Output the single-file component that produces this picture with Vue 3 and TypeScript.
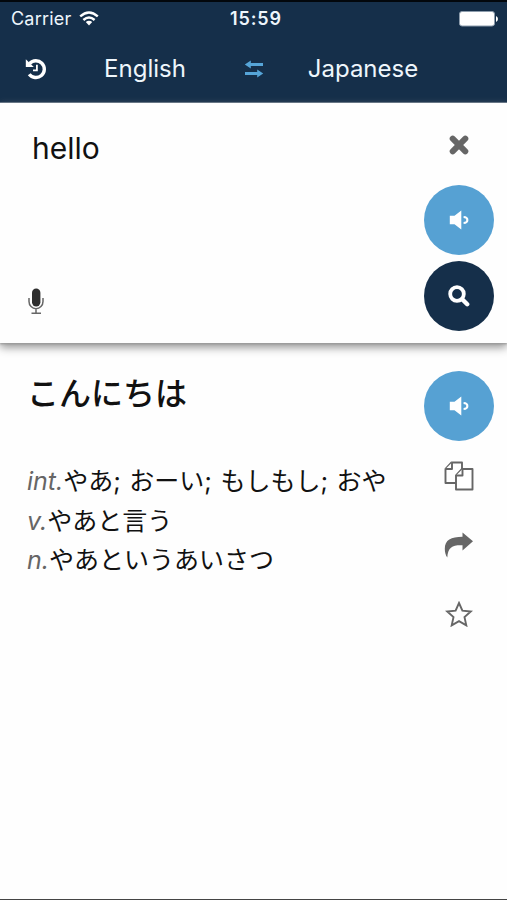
<script setup lang="ts">
interface Definition {
  pos: string
  text: string
}

const source = 'hello'
const translation = 'こんにちは'
const definitions: Definition[] = [
  { pos: 'int.', text: 'やあ; おーい; もしもし; おや' },
  { pos: 'v.', text: 'やあと言う' },
  { pos: 'n.', text: 'やあというあいさつ' },
]
</script>

<template>
  <div class="screen">
    <header class="top">
      <div class="status">
        <div class="carrier">
          <span>Carrier</span>
          <svg class="wifi" viewBox="0 0 20 16" width="20" height="16">
            <g fill="none" stroke="#fff" stroke-width="2.4">
              <path d="M1.2 5.4Q10 -2.5 18.8 5.4" />
              <path d="M4.4 9Q10 3.9 15.6 9" />
            </g>
            <path d="M6.8 11.1Q10 8.5 13.2 11.1L10 14.5Z" fill="#fff" />
          </svg>
        </div>
        <div class="clock">15:59</div>
        <svg class="battery" viewBox="0 0 40 16" width="40" height="16">
          <rect x=".5" y=".5" width="35" height="14.5" rx="2.5" fill="#fff" stroke="#8c9cac" />
          <path d="M37 5q2 .8 2 3t-2 3z" fill="#fff" />
        </svg>
      </div>
      <nav class="languages">
        <button class="history" aria-label="History">
          <svg viewBox="0 0 22 22" width="22" height="22">
            <path d="M4.6 5.6A8.4 8.4 0 1 1 4.2 16.2" fill="none" stroke="#fff" stroke-width="3.4" />
            <path d="M.8 1.2V9h8z" fill="#fff" />
            <path d="M11.9 6.8v5.6H8" fill="none" stroke="#fff" stroke-width="1.8" />
          </svg>
        </button>
        <button class="lang">English</button>
        <button class="swap" aria-label="Swap languages">
          <svg viewBox="0 0 20 18" width="20" height="18">
            <path d="M5 4.5H19M1 13.5H15" stroke="#56a5d8" stroke-width="3" fill="none" />
            <path d="M.8 4.5 6.8.4v8.2zM19.2 13.5l-6-4.1v8.2z" fill="#56a5d8" />
          </svg>
        </button>
        <button class="lang">Japanese</button>
      </nav>
    </header>

    <section class="source">
      <div class="entry">
        <div class="query">{{ source }}</div>
        <svg class="mic" viewBox="0 0 16 27" width="16" height="27">
          <rect x="4" y=".5" width="8.4" height="18" rx="4.2" fill="#2e2e2e" />
          <path d="M1 10v3.5a7 7.2 0 0 0 14 0V10M8 21v4M3.5 25.2h9.5" fill="none" stroke="#666" stroke-width="1.5" />
        </svg>
      </div>
      <div class="rail">
        <button class="clear" aria-label="Clear">
          <svg viewBox="0 0 20 20" width="20" height="20">
            <path d="M3.7 3.7l12.6 12.6M16.3 3.7L3.7 16.3" stroke="#666" stroke-width="6" stroke-linecap="round" />
          </svg>
        </button>
        <button class="round" aria-label="Listen">
          <svg viewBox="0 0 20 20" width="20" height="20">
            <path d="M.8 5.8H5.5L12.3.5v19L5.5 14.2H.8z" fill="#fff" />
            <path d="M14.6 7q3.8.2 3.8 3t-3.8 3" fill="none" stroke="#fff" stroke-width="2" />
          </svg>
        </button>
        <button class="round dark" aria-label="Search">
          <svg viewBox="0 0 22 22" width="22" height="22">
            <circle cx="9" cy="9" r="6.8" fill="none" stroke="#fff" stroke-width="3.8" />
            <path d="M14.2 14.2l5 5" stroke="#fff" stroke-width="4.4" stroke-linecap="round" />
          </svg>
        </button>
      </div>
    </section>

    <section class="result">
      <div class="meaning">
        <h1 lang="ja">{{ translation }}</h1>
        <ul>
          <li v-for="d in definitions" :key="d.pos" lang="ja"><em>{{ d.pos }}</em>{{ d.text }}</li>
        </ul>
      </div>
      <div class="rail actions">
        <button class="round" aria-label="Listen">
          <svg viewBox="0 0 20 20" width="20" height="20">
            <path d="M.8 5.8H5.5L12.3.5v19L5.5 14.2H.8z" fill="#fff" />
            <path d="M14.6 7q3.8.2 3.8 3t-3.8 3" fill="none" stroke="#fff" stroke-width="2" />
          </svg>
        </button>
        <button class="action" aria-label="Copy">
          <svg viewBox="0 0 30 30" width="30" height="30">
            <g fill="#fff" stroke="#666" stroke-width="1.9" stroke-linejoin="round">
              <path d="M7.5 1.5H18V22H1.5V8z" />
              <path d="M8 1.5V8H1.5" />
              <path d="M18 8H28.5V28.5H12V14.5z" />
              <path d="M18.5 8v6.5H12" />
            </g>
          </svg>
        </button>
        <button class="action" aria-label="Share">
          <svg viewBox="0 0 30 26" width="30" height="26">
            <path d="M18.5.5 29 9.3 18.5 18.5V13.2C9 12.8 3.8 14.8 3.3 25.5 1.6 23.4.8 20 .8 16.8.8 8 7 4.8 18.5 4.8z" fill="#666" />
          </svg>
        </button>
        <button class="action" aria-label="Favourite">
          <svg viewBox="0 0 28 26" width="28" height="26">
            <path d="M14 2l3.4 7.6 8.4.9-6.3 5.6 1.8 8.3L14 20.2l-7.3 4.2 1.8-8.3-6.3-5.6 8.4-.9z" fill="none" stroke="#666" stroke-width="1.9" />
          </svg>
        </button>
      </div>
    </section>
  </div>
</template>

<style>
body {
  margin: 0;
  background: #fff;
}
</style>

<style scoped>
.screen {
  box-sizing: border-box;
  display: flex;
  flex-direction: column;
  height: 900px;
  border-bottom: 1px solid #444;
  background: #fefefe;
  color: #111;
  font-family: Inter, "Noto Sans CJK JP", sans-serif;
}
button {
  display: flex;
  align-items: center;
  justify-content: center;
  padding: 0;
  border: 0;
  background: none;
  color: inherit;
  font: inherit;
}
svg {
  display: block;
}
.top {
  box-sizing: border-box;
  height: 103px;
  border-top: 2px solid #02070c;
  border-bottom: 1px solid #5d7084;
  background: #152f4a;
  color: #eef6fc;
}
.status {
  display: grid;
  grid-template-columns: 1fr auto 1fr;
  align-items: center;
  height: 33px;
  padding: 0 8px 0 11px;
}
.carrier {
  display: flex;
  align-items: center;
  gap: 8px;
  font-size: 18px;
  letter-spacing: 0.2px;
}
.clock {
  padding-left: 2px;
  font-size: 18px;
  font-weight: 600;
  letter-spacing: 0.9px;
}
.battery {
  justify-self: end;
}
.languages {
  display: grid;
  grid-template-columns: 72px 146px 72px 146px;
  height: 67px;
}
.lang {
  font-size: 24px;
}
.source {
  z-index: 1;
  display: flex;
  height: 240px;
  background: #fefefe;
  box-shadow: 0 1px 2px #999, 0 4px 9px #8c8c8c;
}
.entry {
  display: flex;
  flex: 1;
  flex-direction: column;
  justify-content: space-between;
  align-items: flex-start;
  padding: 25px 0 28px 28px;
}
.query {
  padding-left: 4px;
  font-size: 30px;
  line-height: 40px;
}
.rail {
  display: flex;
  flex-direction: column;
  align-items: center;
  width: 96px;
}
.clear {
  width: 70px;
  height: 82px;
  padding-top: 2px;
}
.round {
  width: 70px;
  height: 70px;
  flex: none;
  border-radius: 50%;
  background: #56a1d3;
}
.dark {
  margin-top: 6px;
  background: #152f4a;
}
.result {
  display: flex;
  flex: 1;
}
.meaning {
  flex: 1;
  padding: 27px 0 0 27px;
  white-space: nowrap;
}
h1 {
  margin: 0;
  font-size: 32px;
  font-weight: 500;
  line-height: 48px;
}
ul {
  margin: 44px 0 0;
  padding: 0;
  list-style: none;
}
li {
  height: 39.5px;
  font-size: 25px;
  line-height: 39.5px;
  word-spacing: 1.5px;
}
em {
  color: #666;
}
.actions {
  padding-top: 28px;
}
.action {
  width: 70px;
  height: 69px;
}
</style>
